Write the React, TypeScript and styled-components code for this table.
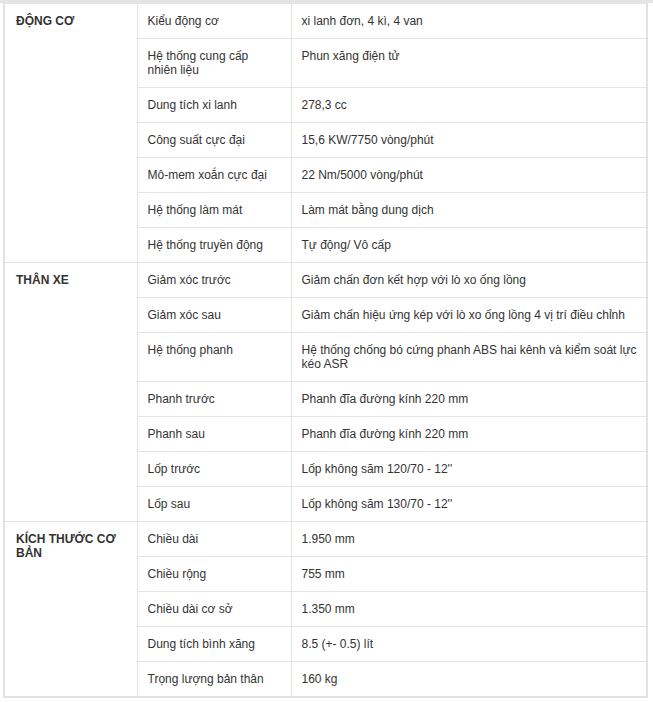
import React from "react";
import styled, { createGlobalStyle } from "styled-components";

const Global = createGlobalStyle`
  html, body { margin: 0; padding: 0; background: #fff; }
  body { font-family: "Liberation Sans", Arial, sans-serif; }
`;

const Page = styled.div`
  border-top: 3px solid #e4e4e4;
  padding: 0 5px 0 3px;
`;

const Table = styled.table`
  width: 645px;
  border-collapse: collapse;
  table-layout: fixed;
  border: 2px solid #e2e2e2;
  border-top: 0;
  font-size: 12px;
  line-height: 14px;
  color: #333;
`;

const GroupCell = styled.th`
  text-align: left;
  vertical-align: top;
  font-weight: bold;
  padding: 10px 10px 10px 11px;
  border: 1px solid #e4e4e4;
`;

const Cell = styled.td<{ $value?: boolean }>`
  vertical-align: top;
  padding: 10px ${(p) => (p.$value ? "4px" : "10px")} 10px 10px;
  border: 1px solid #e4e4e4;
`;

type Spec = [string, string];
const groups: { title: string; rows: Spec[] }[] = [
  {
    title: "ĐỘNG CƠ",
    rows: [
      ["Kiểu động cơ", "xi lanh đơn, 4 kì, 4 van"],
      ["Hệ thống cung cấp nhiên liệu", "Phun xăng điện tử"],
      ["Dung tích xi lanh", "278,3 cc"],
      ["Công suất cực đại", "15,6 KW/7750 vòng/phút"],
      ["Mô-mem xoắn cực đại", "22 Nm/5000 vòng/phút"],
      ["Hệ thống làm mát", "Làm mát bằng dung dịch"],
      ["Hệ thống truyền động", "Tự động/ Vô cấp"],
    ],
  },
  {
    title: "THÂN XE",
    rows: [
      ["Giảm xóc trước", "Giảm chấn đơn kết hợp với lò xo ống lồng"],
      ["Giảm xóc sau", "Giảm chấn hiệu ứng kép với lò xo ống lồng 4 vị trí điều chỉnh"],
      ["Hệ thống phanh", "Hệ thống chống bó cứng phanh ABS hai kênh và kiểm soát lực kéo ASR"],
      ["Phanh trước", "Phanh đĩa đường kính 220 mm"],
      ["Phanh sau", "Phanh đĩa đường kính 220 mm"],
      ["Lốp trước", "Lốp không săm 120/70 - 12''"],
      ["Lốp sau", "Lốp không săm 130/70 - 12''"],
    ],
  },
  {
    title: "KÍCH THƯỚC CƠ BẢN",
    rows: [
      ["Chiều dài", "1.950 mm"],
      ["Chiều rộng", "755 mm"],
      ["Chiều dài cơ sở", "1.350 mm"],
      ["Dung tích bình xăng", "8.5 (+- 0.5) lít"],
      ["Trọng lượng bản thân", "160 kg"],
    ],
  },
];

export default function App() {
  return (
    <>
      <Global />
      <Page>
        <Table>
          <colgroup>
            <col style={{ width: 133 }} />
            <col style={{ width: 154 }} />
            <col />
          </colgroup>
          <tbody>
            {groups.map((g) =>
              g.rows.map((r, i) => (
                <tr key={g.title + i}>
                  {i === 0 && <GroupCell rowSpan={g.rows.length}>{g.title}</GroupCell>}
                  <Cell>{r[0]}</Cell>
                  <Cell $value>{r[1]}</Cell>
                </tr>
              ))
            )}
          </tbody>
        </Table>
      </Page>
    </>
  );
}
